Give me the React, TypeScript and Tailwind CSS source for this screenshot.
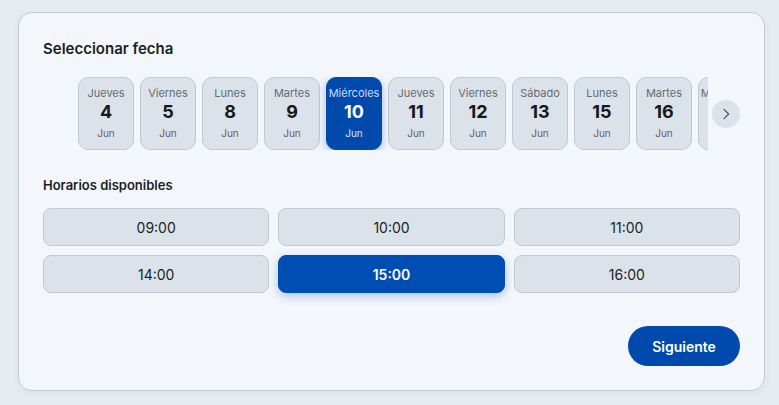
import React from "react";

const dates = [
  { d: "Jueves", n: "4" },
  { d: "Viernes", n: "5" },
  { d: "Lunes", n: "8" },
  { d: "Martes", n: "9" },
  { d: "Miércoles", n: "10", sel: true },
  { d: "Jueves", n: "11" },
  { d: "Viernes", n: "12" },
  { d: "Sábado", n: "13" },
  { d: "Lunes", n: "15" },
  { d: "Martes", n: "16" },
  { d: "Miércoles", n: "17" },
];

const times = ["09:00", "10:00", "11:00", "14:00", "15:00", "16:00"];

export default function App() {
  return (
    <div
      className="w-full h-[405px] bg-[#e7ecf2] pt-[12px] pl-[18px]"
      style={{ fontFamily: "Inter, 'Noto Sans', sans-serif" }}
    >
      <div className="w-[747px] h-[379px] bg-[#f3f7fb] border border-[#c5ccd3] rounded-[14px] shadow-[0_2px_8px_rgba(0,0,0,0.05)] px-[24px] pt-[25px] pb-[24px] flex flex-col">
        <h2 className="text-[15px] leading-[22px] font-semibold text-[#1b1f24]">
          Seleccionar fecha
        </h2>
        <div className="mt-[17px] flex items-center">
          <div className="w-[35px] shrink-0" />
          <div className="w-[631px] overflow-hidden">
            <div className="flex gap-[6px] w-max">
              {dates.map((x, i) => (
                <div
                  key={i}
                  className={
                    "w-[56px] h-[73px] shrink-0 rounded-[10px] border flex flex-col items-center pt-[8px] " +
                    (x.sel
                      ? "bg-[#004aad] border-[#004aad] shadow-[0_3px_10px_rgba(0,74,173,0.35)]"
                      : "bg-[#dbe2e9] border-[#c2c9d1]")
                  }
                >
                  <div
                    className={
                      "text-[11px] leading-[14px] " +
                      (x.sel ? "text-[#c9dbf5]" : "text-[#666b72]")
                    }
                  >
                    {x.d}
                  </div>
                  <div
                    className={
                      "text-[18px] leading-[22px] font-bold mt-[1px] " +
                      (x.sel ? "text-white" : "text-[#15191e]")
                    }
                  >
                    {x.n}
                  </div>
                  <div
                    className={
                      "text-[10px] leading-[14px] mt-[3px] " +
                      (x.sel ? "text-[#dbe7f8]" : "text-[#6d5f6d]")
                    }
                  >
                    Jun
                  </div>
                </div>
              ))}
            </div>
          </div>
          <div className="ml-[4px] w-[28px] h-[28px] rounded-full bg-[#dbe2e9] flex items-center justify-center shrink-0">
            <svg width="16" height="16" viewBox="0 0 24 24" fill="none" stroke="#4b5563" strokeWidth="1.8" strokeLinecap="round" strokeLinejoin="round">
              <path d="M9 5l7 7-7 7" />
            </svg>
          </div>
        </div>
        <h3 className="mt-[25px] text-[13px] leading-[20px] font-semibold text-[#1b1f24]">
          Horarios disponibles
        </h3>
        <div className="mt-[13px] grid grid-cols-3 gap-x-[9px] gap-y-[9px]">
          {times.map((t) => {
            const sel = t === "15:00";
            return (
              <div
                key={t}
                className={
                  "h-[38px] rounded-[8px] border flex items-center justify-center text-[14px] " +
                  (sel
                    ? "bg-[#004db3] border-[#004db3] text-white font-semibold shadow-[0_3px_10px_rgba(0,74,173,0.3)]"
                    : "bg-[#dbe2e9] border-[#c2c9d1] text-[#1b1f24] font-normal")
                }
              >
                {t}
              </div>
            );
          })}
        </div>
        <div className="mt-auto flex justify-end">
          <button className="w-[112px] h-[40px] rounded-full bg-[#004aad] text-white text-[14px] font-semibold">
            Siguiente
          </button>
        </div>
      </div>
    </div>
  );
}
